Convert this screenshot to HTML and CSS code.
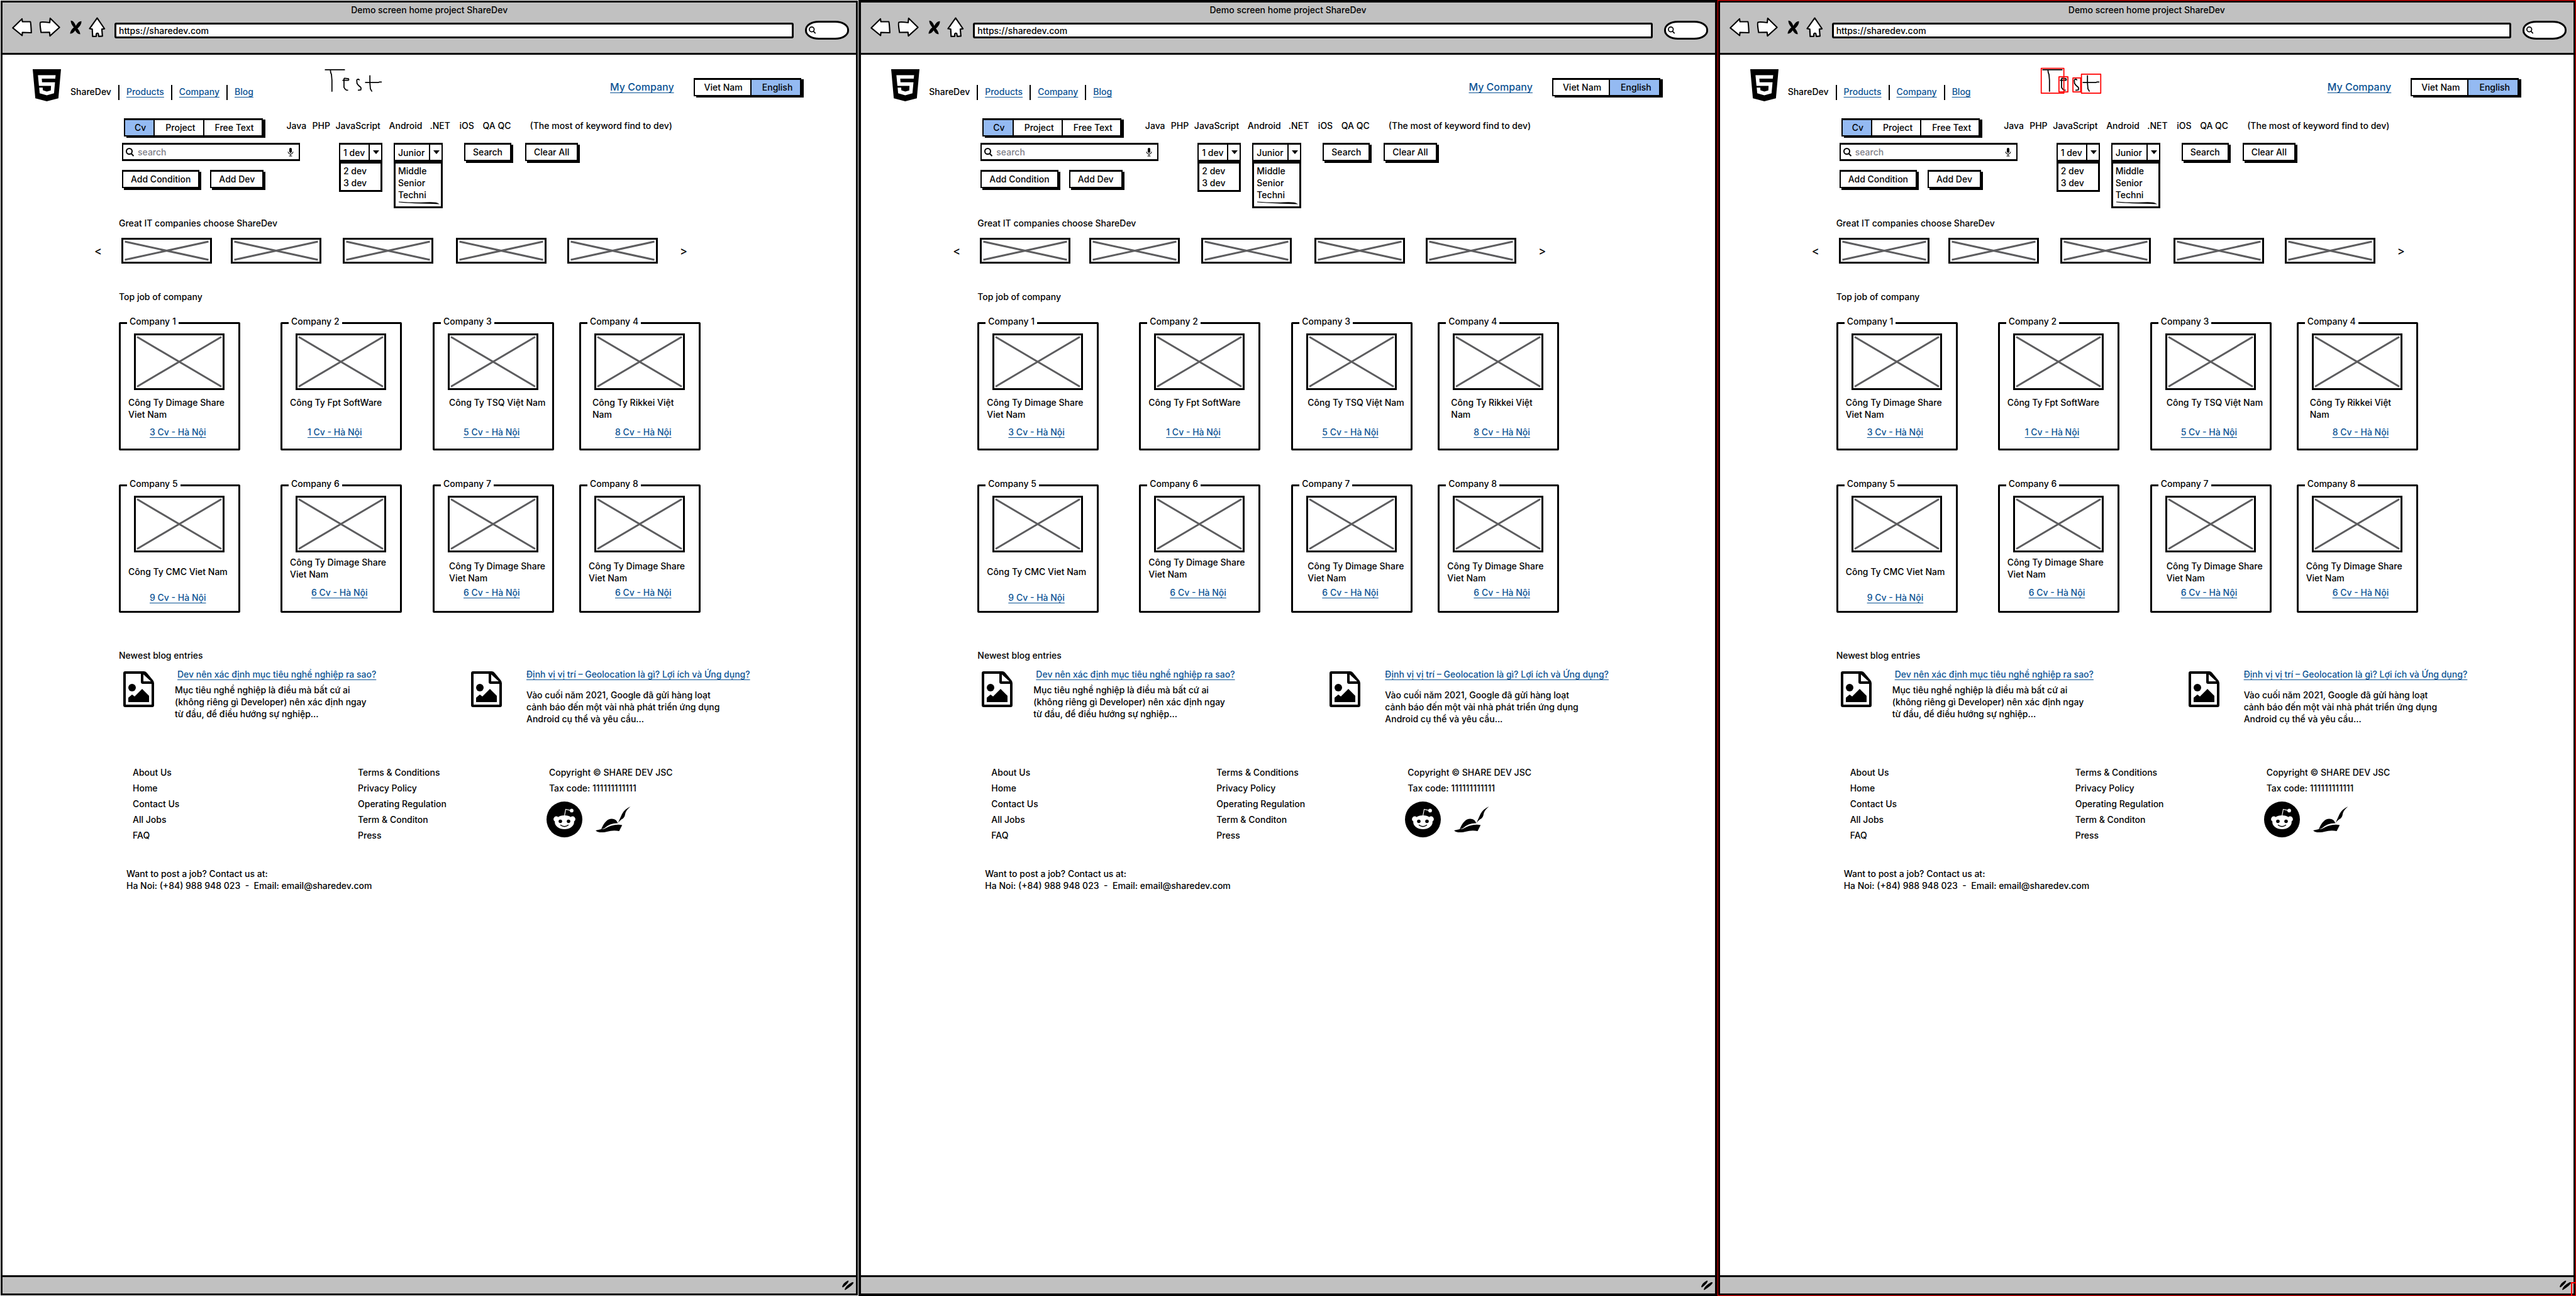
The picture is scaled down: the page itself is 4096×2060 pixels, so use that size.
FILE: index.html
```html
<!DOCTYPE html>
<html lang="en">
<head>
<meta charset="utf-8">
<title>Demo screen home project ShareDev</title>
<link rel="stylesheet" href="styles.css">
</head>
<body>
<svg class="sprite" aria-hidden="true">
  <symbol id="i-back" viewBox="226 142 166 152"><path d="M233 225L309 150L312 173L378 174Q382 180 386 265L312 262L310 288Z"/></symbol>
  <symbol id="i-forward" viewBox="446 142 176 160"><path d="M538 150L615 225L536 295L533 265L463 266Q451 190 457 184Q465 177 534 186Z"/></symbol>
  <symbol id="i-stop" viewBox="694 154 98 118"><path d="M702 157Q725 155 744 200Q765 160 790 163Q790 195 757 222Q780 250 779 270Q755 270 738 238Q720 268 696 264Q700 235 727 213Q700 180 702 157Z"/></symbol>
  <symbol id="i-home" viewBox="843 137 138 164"><path d="M912 145L972 233L950 236L955 293L925 295L921 272Q912 265 905 275L905 294L875 295L872 236L850 232Z"/></symbol>
  <symbol id="i-lens" viewBox="0 0 14 14"><circle cx="5.500" cy="5.500" r="4.500"/><path d="M8.500 9L12.500 13"/></symbol>
  <symbol id="i-mic" viewBox="0 0 10 14"><rect x="3" y="0" width="4" height="8" rx="2"/><path d="M1 6Q1 10 5 10T9 6M5 10V13M2.500 13H7.500" fill="none" stroke="#000" stroke-width="1"/></symbol>
  <symbol id="i-html5" viewBox="396 562 227 257"><path d="M396 562H623L602 795L509 819L417 795Z"/><path fill="#fff" d="M438 610H580L577 638H469L471 667H575L567 755L509 771L452 755L448 710H476L478 731L509 741L541 732L543 696H446Z"/></symbol>
  <symbol id="i-picture" viewBox="0 0 49 57"><path fill-rule="evenodd" d="M3 0H33Q36 0 38 3L47 14Q49 16 49 19V54Q49 57 46 57H3Q0 57 0 54V3Q0 0 3 0ZM4 4V53H45V20H31Q28 20 28 17V4ZM32 5V16H44Z"/><circle cx="14" cy="26" r="6"/><path d="M8 49V42L14 37L18 40L30 28L41 39V49Z"/></symbol>
  <symbol id="i-reddit" viewBox="0 0 57 57"><circle cx="28.500" cy="28.500" r="28.500"/><g fill="#fff"><circle cx="15.500" cy="28" r="4.400"/><circle cx="41.500" cy="28" r="4.400"/><ellipse cx="28.500" cy="33" rx="15.300" ry="11"/><circle cx="40" cy="14.400" r="2.900"/></g><path d="M28.500 23L30.500 12.500L39 14.400" fill="none" stroke="#fff" stroke-width="1.200"/><circle cx="22" cy="31.500" r="2.800"/><circle cx="35" cy="31.500" r="2.800"/><path d="M22.500 37.500Q28.500 42 34.500 37.500" fill="none" stroke="#000" stroke-width="1.400" stroke-linecap="round"/></symbol>
  <symbol id="i-hat" viewBox="0 0 56 41"><path d="M9 36Q16 19 26 19.500Q33 19.500 35.500 26.500Q23 26 14 34.500ZM0 38L9 36L14 35.500Q28 27 42.300 29.400L37.500 39Q28 37 18 40Q4 43 0 38ZM35.700 26Q40 20.500 43 19.500Q46.500 17 47 12Q48 6 55.500 0Q46 4 42 12Z"/></symbol>
  <symbol id="i-grip" viewBox="0 0 19 16"><path d="M0 10Q2 4 9 .5L10.500 1Q9 6 1 11.500ZM4 15Q5 9 16 3L18.500 3.500Q17 8 5 15.500Z"/></symbol>
  <symbol id="i-banner" viewBox="0 0 144 41"><rect x="1.500" y="1.500" width="141" height="38"/><path d="M5.500 6L138.500 35M5.500 35L138.500 6"/></symbol>
  <symbol id="i-photo" viewBox="0 0 144 90"><rect x="1.500" y="1.500" width="141" height="87"/><path d="M5 5.500L139 84.500M5 84.500L139 5.500"/></symbol>
</svg>

<main class="board" id="board"></main>

<template id="screen">
  <section class="frame">
    <header class="chrome">
      <h1 class="chrome__title">Demo screen home project ShareDev</h1>
      <div class="chrome__bar">
        <div class="chrome__nav">
          <button class="tool tool--back" aria-label="Back"><svg><use href="#i-back"/></svg></button>
          <button class="tool tool--forward" aria-label="Forward"><svg><use href="#i-forward"/></svg></button>
          <button class="tool tool--stop" aria-label="Stop"><svg><use href="#i-stop"/></svg></button>
          <button class="tool tool--home" aria-label="Home"><svg><use href="#i-home"/></svg></button>
        </div>
        <input class="address" type="text" aria-label="Address" value="https://sharedev.com">
        <label class="quick"><svg class="quick__icon"><use href="#i-lens"/></svg><input type="text" aria-label="Quick search"></label>
      </div>
    </header>

    <div class="page">
      <div class="masthead">
        <svg class="masthead__logo" role="img" aria-label="HTML5"><use href="#i-html5"/></svg>
        <nav class="menu">
          <span>ShareDev</span>
          <a href="#products">Products</a>
          <a href="#company">Company</a>
          <a href="#blog">Blog</a>
        </nav>
        <div class="masthead__note">
          <svg class="note" viewBox="350 245 500 220" aria-hidden="true">
            <path class="note__ink" d="M371 265H527M413 273L415 288L421 303L425 350V440M514 351H556L562 347L560 338L526 334L523 340V408L532 422L542 430L553 431M647 347L641 342L630 344L627 352L629 376L641 392L658 406L662 414L660 429L640 431M734 313V372L738 420L749 439M698 368H804L810 365L827 364"/>
            <path class="note__box" d="M358 253H542V455H358ZM502 322H575V445H502ZM616 331H679V445H616ZM685 301H842V455H685Z"/>
          </svg>
        </div>
        <a class="masthead__account" href="#my-company">My Company</a>
        <div class="switch masthead__lang"><button>Viet Nam</button><button class="is-on">English</button></div>
      </div>

      <div class="finder">
        <div class="finder__modes">
          <div class="switch switch--modes"><button class="is-on">Cv</button><button>Project</button><button>Free Text</button></div>
          <div class="keywords"><span>Java</span><span>PHP</span><span>JavaScript</span><span>Android</span><span>.NET</span><span>iOS</span><span>QA QC</span><span>(The most of keyword find to dev)</span></div>
        </div>
        <div class="finder__query">
          <label class="search"><svg class="search__lens"><use href="#i-lens"/></svg><input type="text" placeholder="search" aria-label="Search"><svg class="search__mic"><use href="#i-mic"/></svg></label>
          <div class="combo combo--count">
            <select aria-label="Developers"><option>1 dev</option></select>
            <ul class="combo__menu"><li>2 dev</li><li>3 dev</li></ul>
          </div>
          <div class="combo combo--level">
            <select aria-label="Level"><option>Junior</option></select>
            <ul class="combo__menu"><li>Middle</li><li>Senior</li><li>Techni</li><li class="combo__cut" aria-hidden="true"><svg viewBox="0 0 72 6"><path d="M1 1Q25 3 45 2T68 4L70 5Q20 4 1 2Z"/></svg></li></ul>
          </div>
          <div class="finder__actions"><button class="button">Search</button><button class="button">Clear All</button></div>
        </div>
        <div class="finder__extra"><button class="button">Add Condition</button><button class="button">Add Dev</button></div>
      </div>

      <h2 class="heading heading--partners">Great IT companies choose ShareDev</h2>
      <div class="carousel">
        <button aria-label="Previous">&lt;</button>
        <svg><use href="#i-banner"/></svg><svg><use href="#i-banner"/></svg><svg><use href="#i-banner"/></svg><svg><use href="#i-banner"/></svg><svg><use href="#i-banner"/></svg>
        <button aria-label="Next">&gt;</button>
      </div>

      <h2 class="heading heading--jobs">Top job of company</h2>
      <div class="cards">
        <fieldset class="card"><legend>Company 1</legend><svg><use href="#i-photo"/></svg><p>Công Ty Dimage Share<br>Viet Nam</p><a href="#c1">3 Cv - Hà Nội</a></fieldset>
        <fieldset class="card card--link-near"><legend>Company 2</legend><svg><use href="#i-photo"/></svg><p>Công Ty Fpt SoftWare</p><a href="#c2">1 Cv - Hà Nội</a></fieldset>
        <fieldset class="card card--name-far"><legend>Company 3</legend><svg><use href="#i-photo"/></svg><p>Công Ty TSQ Việt Nam</p><a href="#c3">5 Cv - Hà Nội</a></fieldset>
        <fieldset class="card card--name-mid card--link-far"><legend>Company 4</legend><svg><use href="#i-photo"/></svg><p>Công Ty Rikkei Việt<br>Nam</p><a href="#c4">8 Cv - Hà Nội</a></fieldset>
        <fieldset class="card card--low"><legend>Company 5</legend><svg><use href="#i-photo"/></svg><p>Công Ty CMC Viet Nam</p><a href="#c5">9 Cv - Hà Nội</a></fieldset>
        <fieldset class="card card--high"><legend>Company 6</legend><svg><use href="#i-photo"/></svg><p>Công Ty Dimage Share<br>Viet Nam</p><a href="#c6">6 Cv - Hà Nội</a></fieldset>
        <fieldset class="card card--tight card--name-far"><legend>Company 7</legend><svg><use href="#i-photo"/></svg><p>Công Ty Dimage Share<br>Viet Nam</p><a href="#c7">6 Cv - Hà Nội</a></fieldset>
        <fieldset class="card card--tight card--link-far"><legend>Company 8</legend><svg><use href="#i-photo"/></svg><p>Công Ty Dimage Share<br>Viet Nam</p><a href="#c8">6 Cv - Hà Nội</a></fieldset>
      </div>

      <h2 class="heading heading--blog">Newest blog entries</h2>
      <div class="posts">
        <article class="post">
          <svg><use href="#i-picture"/></svg>
          <div><a class="post__title post__title--inset" href="#post-1">Dev nên xác định mục tiêu nghề nghiệp ra sao?</a>
          <p>Mục tiêu nghề nghiệp là điều mà bất cứ ai<br>(không riêng gì Developer) nên xác định ngay<br>từ đầu, để điều hướng sự nghiệp...</p></div>
        </article>
        <article class="post post--spaced">
          <svg><use href="#i-picture"/></svg>
          <div><a class="post__title" href="#post-2">Định vị vị trí – Geolocation là gì? Lợi ích và Ứng dụng?</a>
          <p>Vào cuối năm 2021, Google đã gửi hàng loạt<br>cảnh báo đến một vài nhà phát triển ứng dụng<br>Android cụ thể và yêu cầu...</p></div>
        </article>
      </div>

      <footer class="foot">
        <ul><li>About Us</li><li>Home</li><li>Contact Us</li><li>All Jobs</li><li>FAQ</li></ul>
        <ul><li>Terms &amp; Conditions</li><li>Privacy Policy</li><li>Operating Regulation</li><li>Term &amp; Conditon</li><li>Press</li></ul>
        <div>
          <p>Copyright © SHARE DEV JSC</p>
          <p>Tax code: 111111111111</p>
          <div class="foot__social"><svg class="foot__reddit" role="img" aria-label="Reddit"><use href="#i-reddit"/></svg><svg class="foot__hat" aria-hidden="true"><use href="#i-hat"/></svg></div>
        </div>
      </footer>
      <address class="contact">Want to post a job? Contact us at:<br>Ha Noi: (+84) 988 948 023 &nbsp;-&nbsp; Email: email@sharedev.com</address>
    </div>

    <div class="status"><svg><use href="#i-grip"/></svg></div>
  </section>
</template>
<script src="script.js"></script>
</body>
</html>
```
FILE: styles.css
```css
:root {
  --ink: #000;
  --bar: #c1c1c1;
  --accent: #94baf2;
  --link: #0b5394;
}

* { box-sizing: border-box; }

body {
  margin: 0;
  color: var(--ink);
  background: #fff;
  font: 500 14px/19px Inter, "Noto Sans", sans-serif;
}

h1, h2, p, ul { margin: 0; padding: 0; font-size: 14px; font-weight: 500; list-style: none; }
svg { display: block; flex: none; }
button, input, select { font: inherit; color: inherit; margin: 0; padding: 0; border: 0; border-radius: 0; background: none; }
a { color: var(--link); text-decoration: underline; text-decoration-thickness: 1px; text-underline-offset: 3px; text-decoration-skip-ink: none; }
.sprite { position: absolute; width: 0; height: 0; }

/* Three browser frames side by side */
.board { display: grid; grid-template-columns: repeat(3, 1fr); min-height: 100vh; }
.frame { position: relative; display: flex; flex-direction: column; border: 4px solid var(--ink); outline: 1px solid #fff; outline-offset: -1px; }
.frame--plain { outline-color: var(--ink); }
.frame--marked { outline-color: #f00; }
.frame--marked::after { content: ""; position: absolute; right: -4px; bottom: -4px; width: 6px; height: 20px; border: solid #f00; border-width: 2px 0 0 2px; }

.chrome { padding-bottom: 15px; background: var(--bar); border-bottom: 3px solid var(--ink); }
.chrome__title { line-height: 23px; text-align: center; }
.chrome__bar { display: flex; align-items: center; padding: 0 11px 0 15px; }
.chrome__nav { display: flex; align-items: center; height: 32px; margin: 0 14px 10px 0; gap: 11px; }
.tool svg { width: 100%; height: 100%; fill: #fff; stroke: #000; stroke-width: 11px; stroke-linejoin: round; }
.tool--back { width: 32px; height: 30px; }
.tool--forward { width: 34px; height: 32px; }
.tool--stop { width: 19px; height: 23px; margin-left: 4px; }
.tool--home { width: 27px; height: 32px; }
.tool--stop svg { fill: #000; stroke: none; }
.address { flex: 1; min-width: 0; height: 25px; padding: 0 4px; background: #fff; border: 3px solid var(--ink); border-radius: 3px; }
.quick { display: flex; align-items: center; width: 70px; height: 30px; margin-left: 18px; padding-left: 3px; background: #fff; border: 3px solid var(--ink); border-radius: 22px / 14px; }
.quick input { width: 40px; }
.quick__icon { width: 12px; height: 12px; fill: none; stroke: #000; stroke-width: 2px; }

.page { flex: 1; }

.masthead { display: grid; grid-template-columns: 60px 401px 1fr auto auto; height: 74px; padding: 20px 87px 0 48px; }
.masthead__logo { align-self: end; width: 45px; height: 51px; }
.menu { display: flex; align-self: end; height: 24px; margin-bottom: 2px; line-height: 22px; }
.menu a { position: relative; }
.menu > * + * { margin-left: 24px; }
.menu a::before { content: ""; position: absolute; left: -13px; top: 0; width: 2px; height: 24px; background: var(--ink); }
.note { width: 98px; height: 43px; fill: none; stroke-width: 9px; stroke-linecap: round; stroke-linejoin: round; }
.note__ink { stroke: #000; }
.note__box { stroke: #f00; display: none; }
.frame .note { display: none; }
.frame--noted .note { display: block; }
.frame--marked .note__box { display: block; }
.masthead__account { margin: 16px 31px 0 0; font-size: 16px; line-height: 30px; }
.masthead__lang { align-self: start; margin-top: 17px; }

.switch { display: flex; height: 29px; background: #fff; border: 2px solid var(--ink); border-top-width: 3px; box-shadow: 4px 2px 0 var(--ink); }
.switch button { padding: 0 12px 2px 15px; }
.switch button + button { border-left: 2px solid var(--ink); padding-left: 17px; }
.switch .is-on { background: var(--accent); }

.finder { padding: 27px 0 0 190px; }
.finder__modes { display: flex; gap: 38px; padding-left: 3px; }
.keywords { display: grid; grid-template-columns: 41px 37px 85px 65px 47px 37px 75px auto; line-height: 24px; height: 24px; white-space: nowrap; }
.finder__query { display: flex; margin-top: 10px; gap: 18px; }
.search { display: flex; align-items: center; width: 283px; height: 29px; margin-right: 44px; padding: 0 8px 0 4px; gap: 5px; border: 3px solid var(--ink); border-width: 3px 2px; }
.search input { flex: 1; min-width: 0; }
.search input::placeholder { color: #808089; opacity: 1; }
.search__lens { width: 14px; height: 14px; fill: none; stroke: #000; stroke-width: 2px; }
.search__mic { width: 10px; height: 14px; }

.combo { position: relative; height: 30px; }
.combo--count { width: 69px; }
.combo--level { width: 78px; }
.combo select { width: 100%; height: 100%; padding-left: 5px; appearance: none; border: 2px solid var(--ink); border-width: 3px 2px; }
.combo::before { content: ""; position: absolute; top: 2px; bottom: 2px; right: 20px; width: 2px; background: var(--ink); }
.combo::after { content: ""; position: absolute; top: 12px; right: 5px; border: 5px solid transparent; border-top: 6px solid var(--ink); border-bottom: 0; }
.combo__menu { position: absolute; top: 100%; left: 0; right: 0; padding: 2px 0 2px 4px; background: #fff; border: 3px solid var(--ink); }
.combo__cut svg { width: 100%; height: 7px; }
.finder__actions { display: flex; gap: 22px; margin-left: 16px; }
.button { height: 29px; padding: 0 12px 1px; background: #fff; border: 2px solid var(--ink); border-top-width: 3px; box-shadow: 3px 3px 0 var(--ink); }
.finder__extra { display: flex; gap: 17px; margin-top: 13px; }

.heading { padding-left: 185px; }
.heading--partners { margin-top: 46px; }
.heading--jobs { margin-top: 43px; }
.heading--blog { margin-top: 58px; }

.carousel { display: grid; grid-template-columns: 43px 174px 178px 180px 177px 179px auto; align-items: center; justify-content: start; margin-top: 14px; padding-left: 146px; }
.carousel button { width: 12px; font-size: 18px; }
.carousel svg { width: 144px; height: 41px; }
.carousel svg, .card svg { fill: none; stroke: #5d5d5f; stroke-width: 3px; }
#i-banner rect, #i-photo rect { stroke: #000; }

.cards { display: grid; grid-template-columns: 257px 242px 233px 193px; row-gap: 44px; margin-top: 21px; padding-left: 185px; }
.card { --name-x: 12px; --link-x: 46px; --name-top: 10px; --name-box: 57px; width: 193px; height: 214px; min-width: 0; margin: 0; padding: 0; border: 3px solid var(--ink); border-radius: 2px; white-space: nowrap; }
.card legend { margin-left: 10px; padding: 0 4px 5px; line-height: 18px; }
.card svg { width: 144px; height: 90px; margin: 5px auto 0 21px; }
.card p { height: var(--name-box); padding: var(--name-top) 0 0 var(--name-x); }
.card a { margin-left: var(--link-x); }
.card--name-mid { --name-x: 18px; }
.card--name-far { --name-x: 23px; }
.card--link-near { --link-x: 40px; }
.card--link-far { --link-x: 54px; }
.card--low { --name-top: 21px; --name-box: 62px; }
.card--high { --name-top: 6px; --name-box: 54px; }
.card--tight { --name-top: 12px; --name-box: 54px; }

.posts { display: grid; grid-template-columns: 553px auto; justify-content: start; margin-top: 11px; padding-left: 192px; white-space: nowrap; }
.post { display: flex; gap: 33px; }
.post svg { width: 49px; height: 57px; margin-top: 5px; }
.post p { margin-top: 6px; }
.post__title--inset { margin-left: 4px; }
.post--spaced { gap: 39px; }
.post--spaced p { margin-top: 14px; }

.foot { display: grid; grid-template-columns: 358px 304px auto; justify-content: start; margin-top: 63px; padding-left: 207px; line-height: 25px; }
.foot__social { display: flex; align-items: center; gap: 21px; margin: 9px 0 0 -4px; }
.foot__reddit { width: 57px; height: 57px; }
.foot__hat { width: 56px; height: 41px; }
.contact { margin-top: 39px; padding-left: 197px; font-style: normal; }

.status { display: flex; justify-content: flex-end; align-items: center; height: 29px; padding-right: 3px; background: var(--bar); border-top: 3px solid var(--ink); }
.status svg { width: 19px; height: 16px; }
```
FILE: script.js
```js
// Stamp the same screen once per state: annotated, clean, and annotated with markers.
const board = document.getElementById('board');
const screenTemplate = document.getElementById('screen');

[['frame--noted'], ['frame--plain'], ['frame--noted', 'frame--marked']].forEach((states) => {
  const copy = screenTemplate.content.cloneNode(true);
  copy.querySelector('.frame').classList.add(...states);
  board.append(copy);
});
```
